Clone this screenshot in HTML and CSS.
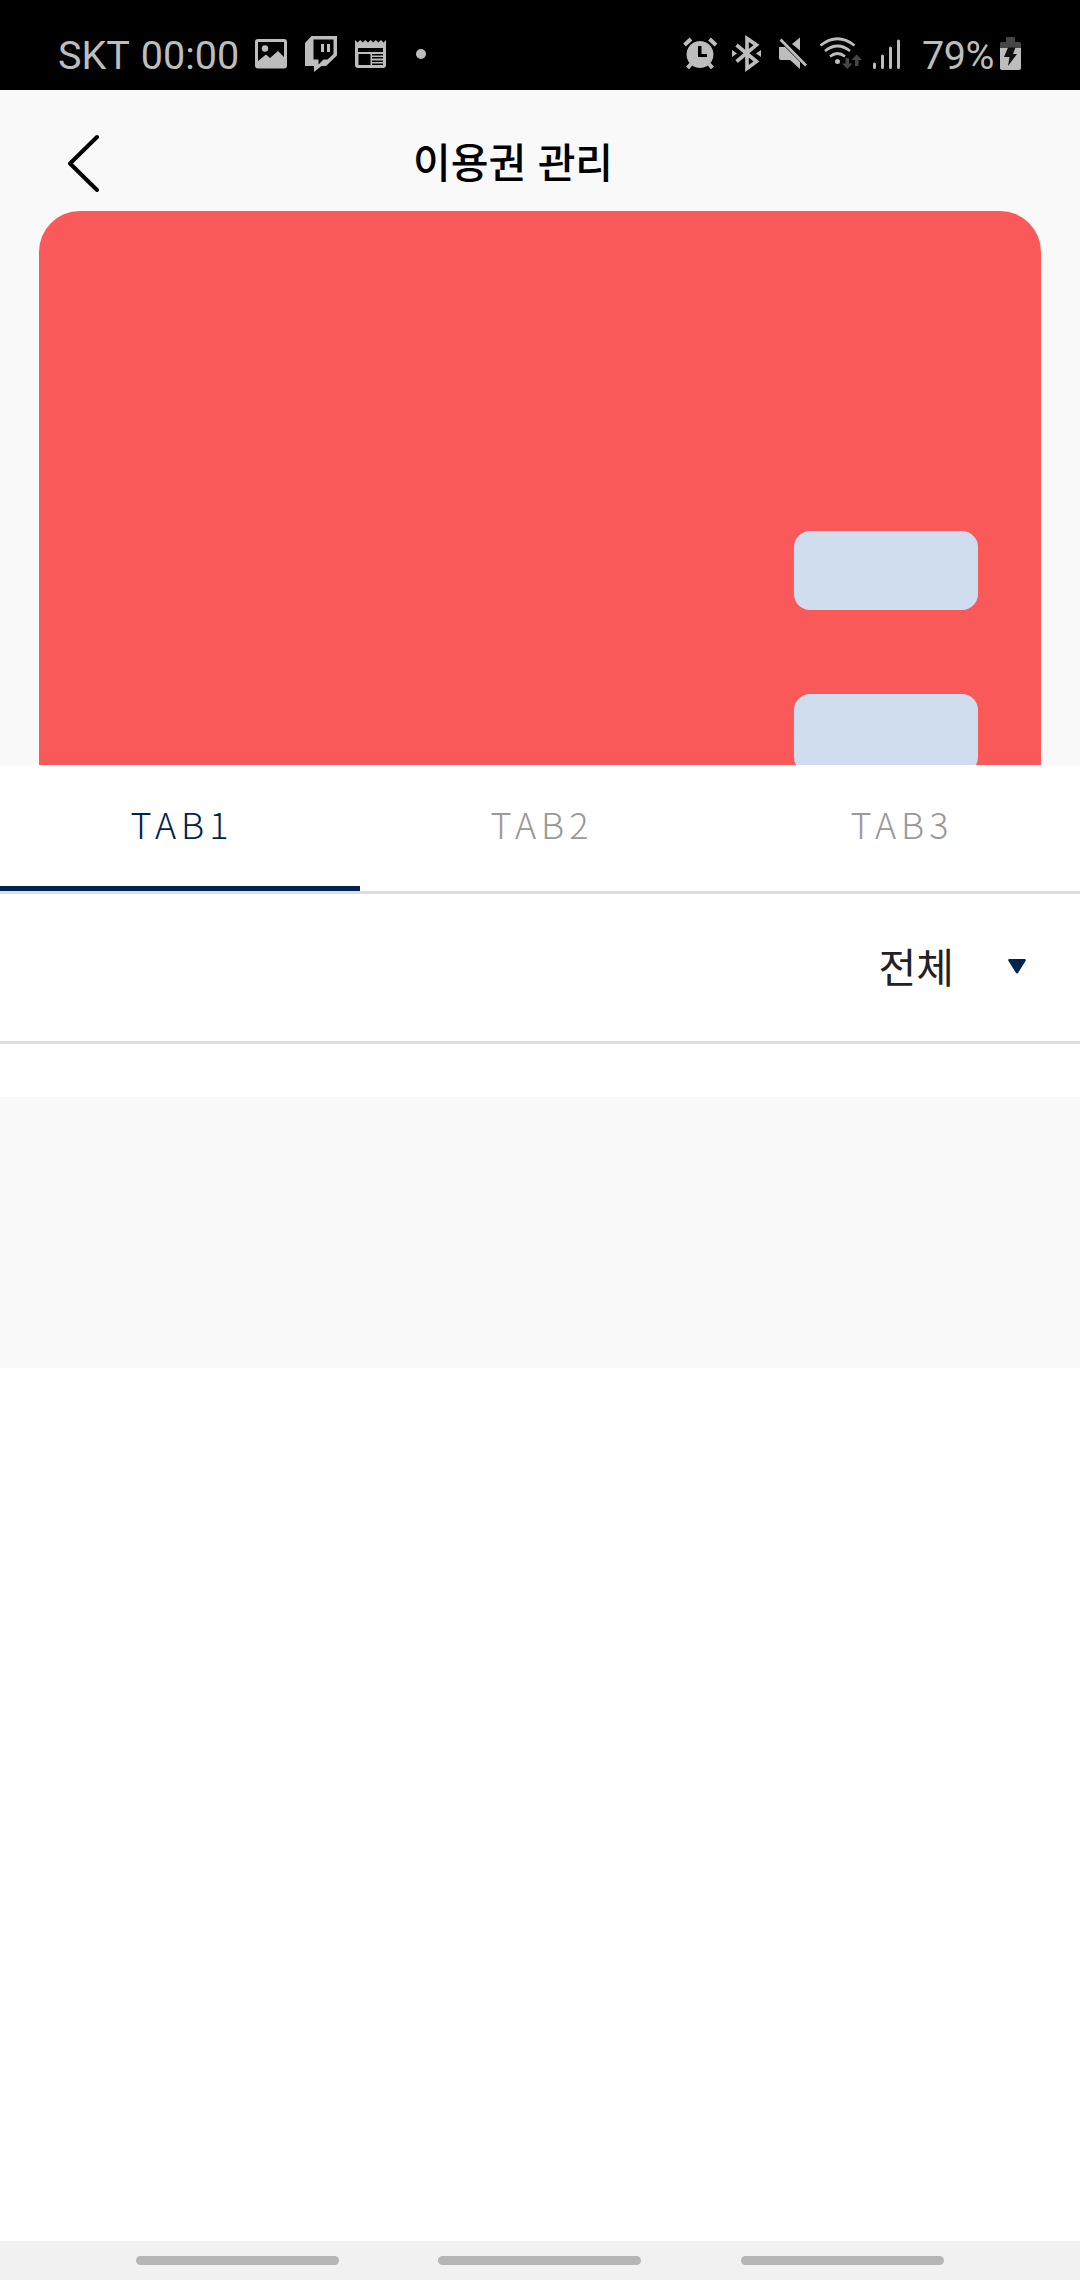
FILE: index.html
```html
<!DOCTYPE html>
<html lang="ko">
<head>
<meta charset="utf-8">
<title>이용권 관리</title>
<link rel="stylesheet" href="styles.css">
</head>
<body>
<div class="screen">
  <div class="status">
    <span class="carrier">SKT 00:00</span>
    <div class="notices">
      <svg width="32" height="36" viewBox="255 36 32 36"><path fill-rule="evenodd" d="M258 39h26q3 0 3 3v23.500q0 3-3 3h-26q-3 0-3-3V42q0-3 3-3zM258 42v19l8-6.500 4 3.500 8-7 6 6V42z"/><circle cx="265" cy="48.500" r="3.200"/></svg>
      <svg width="32" height="36" viewBox="305 36 32 36"><path fill-rule="evenodd" d="M311.500 36H337v19.500L326 66h-4.500l-7.500 6v-6h-9V43zM313.500 39.500v20h5v5l5-5h4l6-5.500V39.500z"/><path d="M321 44h3v8h-3zM327 44h3v8h-3z"/></svg>
      <svg width="31" height="36" viewBox="355 36 31 36"><path fill-rule="evenodd" d="M355 40l2.600 2.500 2.600-2.500 2.600 2.500 2.600-2.500 2.600 2.500 2.600-2.500 2.600 2.500 2.600-2.500 2.600 2.500 2.600-2.500 2.500 2.500L386 40v25q0 3-3 3h-25q-3 0-3-3zM358 48v4h25v-4zM358.500 54v11h12V54zM372 54h11v1.500h-11zM372 57h11v1.500h-11zM372 60.500h11V62h-11zM372 63.500h11V65h-11z"/></svg>
      <span class="more"></span>
    </div>
    <div class="system">
      <svg width="34" height="36" viewBox="683 36 34 36"><path fill-rule="evenodd" d="M700 41a13.500 13.500 0 1 1-.01 0zM698 46v11h9v-3h-5.500v-8z"/><path class="line" stroke-width="4" d="M684.500 45l6.500-6M709.500 39l6.500 6M691 64l-3.500 4M709 64l3.500 4"/></svg>
      <svg width="29" height="36" viewBox="732 36 29 36"><path class="line" stroke-width="3.600" d="M736.500 45l20 16.500-9.500 7V38.500l9.500 6.500-20 16.500"/><path d="M732 50l5 3.500-5 3.500zM761 50l-5 3.500 5 3.500z"/></svg>
      <svg width="29" height="36" viewBox="779 36 29 36"><path d="M779 47h6l15 15v7l-10-9h-9q-2 0-2-2zM800 37.500v13L792 44z"/><path class="line" stroke-width="2.800" d="M780.500 39.500L806 65.500"/></svg>
      <svg width="42" height="36" viewBox="820 36 42 36"><path class="line" stroke-width="2.800" d="M820.500 45.500q17-13.500 34 0M825 51q12.500-10 25 0M830 56.500q7.500-6 15 0"/><circle cx="837.500" cy="61.500" r="2.500"/><path class="dim" d="M845.500 58h3.500v5.500h3.500l-5.200 5.500-5.300-5.500h3.500zM855 66v-6h-3.500l5.200-5.500 5.300 5.500h-3.500v6z"/></svg>
      <svg width="28" height="36" viewBox="873 36 28 36"><path class="line round" stroke-width="3" d="M874.500 64v3.500M882.500 56v11.500M890.500 48v19.500M898.500 41v26.500"/></svg>
      <span class="percent">79%</span>
      <svg width="21" height="36" viewBox="1000 36 21 36"><path class="dim" d="M1006 38q0-1 1-1h7q1 0 1 1v4h4.500q1.500 0 1.500 1.500V48h-21v-4.500q0-1.500 1.500-1.500h4.500z"/><path d="M1000 48h21v20q0 2-2 2h-17q-2 0-2-2z"/><path class="bolt" d="M1008 47.500h7.500l-2.500 6.500h4l-9 12 1.500-9h-5.500z"/></svg>
    </div>
  </div>
  <header class="header">
    <svg class="back" width="34" height="60" viewBox="66 132 34 60"><path d="M97 137L70 163.500L97 190"/></svg>
    <h1>이용권 관리</h1>
  </header>
  <section class="hero">
    <div class="card">
      <div class="button"></div>
      <div class="button"></div>
    </div>
  </section>
  <nav class="tabs">
    <div class="tab active">TAB1</div>
    <div class="tab">TAB2</div>
    <div class="tab">TAB3</div>
  </nav>
  <div class="filter">
    <span>전체</span>
    <svg width="18" height="15" viewBox="0 0 18 15"><path d="M1.500 0h15q2 0 1 2L10.300 13.500q-1.300 2-2.600 0L.5 2q-1-2 1-2z"/></svg>
  </div>
  <div class="panel"></div>
  <footer class="softkeys"><i></i><i></i><i></i></footer>
</div>
</body>
</html>
```
FILE: styles.css
```css
* { box-sizing: border-box; }
body { margin: 0; background: #fff; }
svg { display: block; flex: none; }
.screen {
  width: 1080px;
  height: 2280px;
  display: flex;
  flex-direction: column;
  overflow: hidden;
  background: #fff;
  font-family: "Noto Sans CJK KR", sans-serif;
}
.status {
  height: 90px;
  flex: none;
  display: flex;
  align-items: flex-start;
  padding: 36px 59px 0 58px;
  background: #000;
  color: #bdbdbd;
  fill: #bdbdbd;
  font: 39.5px/40px Roboto, sans-serif;
}
.status svg { overflow: visible; }
.carrier { width: 197px; white-space: nowrap; word-spacing: 2px; }
.notices { display: flex; gap: 18px; }
.more { width: 10px; height: 10px; margin: 13px 0 0 12px; border-radius: 50%; background: #bdbdbd; }
.system { display: flex; margin-left: auto; }
.system svg + svg { margin-left: 15px; }
.system svg:nth-child(3) { margin-left: 18px; }
.system svg:nth-child(4) { margin-left: 12px; }
.system svg:nth-child(5) { margin-left: 11px; }
.percent { width: 78px; margin: 0 0 0 21px; white-space: nowrap; letter-spacing: -0.5px; }
.line { fill: none; stroke: #bdbdbd; }
.round { stroke-linecap: round; }
.dim { fill: #464646; }
.bolt { fill: #111; }
.header {
  height: 121px;
  flex: none;
  display: flex;
  align-items: flex-start;
  padding: 42px 66px 0;
  background: #f9f9f9;
}
.back path { fill: none; stroke: #000; stroke-width: 4; stroke-linecap: round; stroke-linejoin: round; }
h1 {
  margin: 0 0 0 313px;
  font-size: 41px;
  line-height: 56px;
  font-weight: 500;
  color: #000;
  white-space: nowrap;
}
.hero { height: 554px; flex: none; padding: 0 39px; background: #f9f9f9; overflow: hidden; }
.card {
  height: 620px;
  display: flex;
  flex-direction: column;
  align-items: flex-end;
  gap: 84px;
  padding: 320px 63px 0 0;
  border-radius: 41px;
  background: #fa5959;
}
.button { width: 184px; height: 79px; flex: none; border-radius: 16px; background: #cfddef; }
.tabs { height: 129px; flex: none; display: grid; grid-template-columns: repeat(3, 1fr); border-bottom: 3px solid #ddd; }
.tab {
  padding-left: 4px;
  line-height: 117px;
  text-align: center;
  font-size: 36px;
  font-weight: 300;
  letter-spacing: 5px;
  color: #999;
}
.active { border-bottom: 5px solid #00234f; color: #00234f; }
.filter {
  height: 150px;
  flex: none;
  display: flex;
  align-items: center;
  justify-content: flex-end;
  gap: 54px;
  padding: 0 54px 2px 0;
  border-bottom: 3px solid #ddd;
  font-size: 41px;
  color: #222;
}
.filter span { padding-bottom: 4px; }
.filter svg { fill: #00234f; }
.panel { height: 271px; flex: none; margin-top: 53px; background: #f9f9f9; }
.softkeys {
  height: 39px;
  flex: none;
  display: flex;
  margin-top: auto;
  padding: 15px 136px 0;
  gap: 99px;
  background: #f1f1f1;
}
.softkeys i { width: 203px; height: 9px; flex: none; border-radius: 5px; background: #b5b5b5; }
.softkeys i:last-child { margin-left: 1px; }
```
